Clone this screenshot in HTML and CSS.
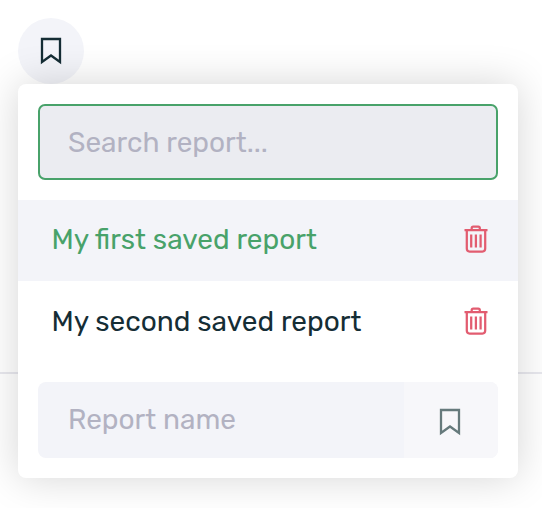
FILE: index.html
```html
<!DOCTYPE html>
<html lang="en">
<head>
<meta charset="utf-8">
<title>Saved reports</title>
<link rel="stylesheet" href="styles.css">
</head>
<body>
<svg class="symbols" aria-hidden="true">
  <symbol id="bookmark" viewBox="0 0 22 28"><path d="M2 2H20V25L11 18.5L2 25Z" fill="none" stroke="currentColor" stroke-width="2.3"/></symbol>
  <symbol id="trash" viewBox="0 0 24 28"><path d="M.5 5H23.500M7.700 4.500V3Q7.700 1.500 9.200 1.500H14.300Q15.800 1.500 15.800 3V4.500M2.800 5V23.500Q2.800 26.500 5.600 26.500H18.400Q21.200 26.500 21.200 23.500V5M7.200 9.500V22.500M11.900 9.500V22.500M16.600 9.500V22.500" fill="none" stroke="currentColor" stroke-width="2.250"/></symbol>
</svg>
<header class="toolbar">
  <button class="toggle" aria-label="Saved reports"><svg class="mark"><use href="#bookmark"/></svg></button>
  <section class="menu">
    <div class="search"><span>Search report...</span></div>
    <ul class="reports">
      <li class="report active"><span>My first saved report</span><svg class="trash"><use href="#trash"/></svg></li>
      <li class="report"><span>My second saved report</span><svg class="trash"><use href="#trash"/></svg></li>
    </ul>
    <div class="save">
      <span class="name">Report name</span>
      <button class="save-button" aria-label="Save report"><svg class="mark"><use href="#bookmark"/></svg></button>
    </div>
  </section>
</header>
</body>
</html>
```
FILE: styles.css
```css
* { box-sizing: border-box; }
body {
  margin: 0;
  height: 508px;
  overflow: hidden;
  background: #fff;
  color: #152d35;
  font: 28px/36px Rubik, Roboto, sans-serif;
}
.symbols { position: absolute; width: 0; height: 0; }
button { border: 0; padding: 0; color: inherit; }
.toolbar {
  position: relative;
  height: 374px;
  padding: 18px;
  border-bottom: 2px solid #e8e8ee;
}
.toggle {
  display: flex;
  align-items: center;
  justify-content: center;
  width: 66px;
  height: 66px;
  border-radius: 50%;
  background: #f3f4f9;
}
.mark { display: block; width: 22px; height: 28px; }
.menu {
  position: absolute;
  top: 84px;
  left: 18px;
  width: 500px;
  height: 394px;
  padding: 20px 0;
  border-radius: 8px;
  background: #fff;
  box-shadow: 0 0 40px rgba(0, 0, 0, .17);
}
.search {
  display: flex;
  align-items: center;
  height: 76px;
  margin: 0 20px;
  padding: 2px 28px 0;
  border: 2px solid #48a26a;
  border-radius: 7px;
  background: #ebecf1;
  color: #b2b2c2;
}
.reports { list-style: none; margin: 20px 0; padding: 0; }
.report {
  display: flex;
  align-items: center;
  justify-content: space-between;
  height: 81px;
  padding: 0 30px 0 33.5px;
}
.active { padding-bottom: 2px; background: #f3f4f9; color: #48a26a; }
.trash { width: 24px; height: 28px; margin-bottom: 1px; color: #e25c70; }
.save {
  display: flex;
  height: 76px;
  margin: 0 20px;
  border-radius: 8px;
  overflow: hidden;
  background: #f3f4f9;
  color: #b2b2c2;
}
.name { flex: 1; padding: 20px 0 0 30px; }
.save-button {
  display: flex;
  align-items: center;
  justify-content: center;
  width: 94px;
  padding: 4px 3px 0 0;
  background: #f7f7fa;
  color: #667a7c;
}
```
